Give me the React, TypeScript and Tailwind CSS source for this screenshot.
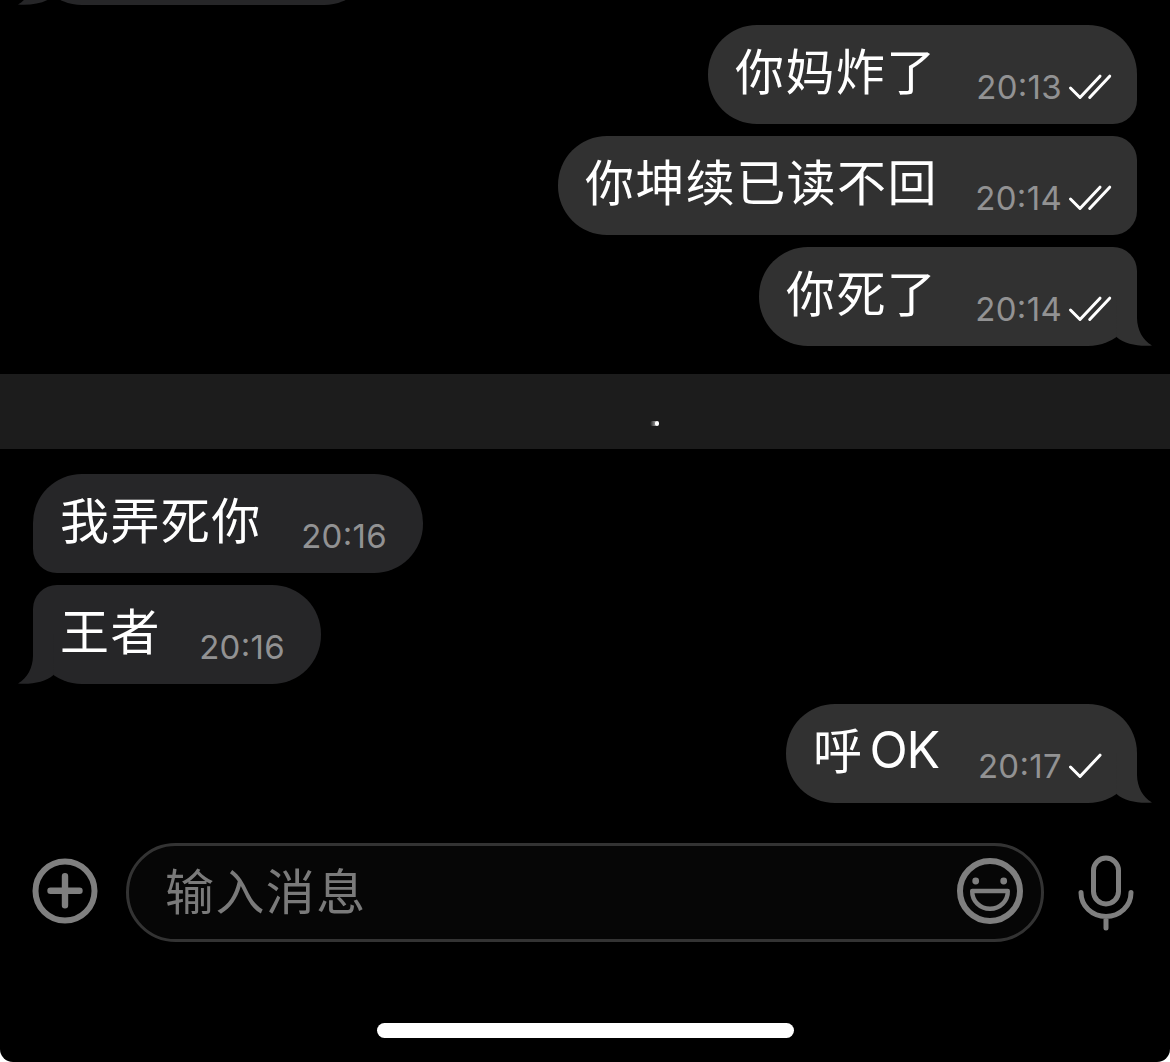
import clsx from "clsx";

type Message = {
  text: string;
  latin?: string;
  time: string;
  outgoing?: boolean;
  read?: boolean;
  tail?: boolean;
  // width, corners and spacing above the bubble
  shape: string;
};

const earlier: Message[] = [
  { text: "", time: "", tail: true, shape: "-mt-[94px] w-[340px] rounded-[49px]" },
  { text: "你妈炸了", time: "20:13", outgoing: true, read: true, shape: "mt-5 w-[429px] rounded-[49px] rounded-br-[24px]" },
  { text: "你坤续已读不回", time: "20:14", outgoing: true, read: true, shape: "mt-3 w-[579px] rounded-[49px] rounded-r-[24px]" },
  { text: "你死了", time: "20:14", outgoing: true, read: true, tail: true, shape: "mt-3 w-[378px] rounded-[49px] rounded-tr-[24px]" }
];

const unread: Message[] = [
  { text: "我弄死你", time: "20:16", shape: "mt-[25px] w-[390px] rounded-[49px] rounded-bl-[24px]" },
  { text: "王者", time: "20:16", tail: true, shape: "mt-3 w-[288px] rounded-[49px] rounded-tl-[24px]" },
  { text: "呼", latin: "OK", time: "20:17", outgoing: true, tail: true, shape: "mt-5 w-[351px] rounded-[49px]" }
];

function Tail({ outgoing }: { outgoing?: boolean }) {
  return (
    <svg
      viewBox="0 0 40 50"
      className={clsx(
        "absolute bottom-0 h-[50px] w-10",
        outgoing ? "-right-[16px] text-[#313131]" : "-left-[16px] -scale-x-100 text-[#262628]"
      )}
      fill="currentColor"
    >
      <path d="M4 0H24V22C24.3 34 29.5 44 39 49.6C24 50.5 12 48 3.5 41Z" />
    </svg>
  );
}

function Checks({ read }: { read?: boolean }) {
  return (
    <svg
      viewBox="0 0 44 28"
      className="ml-[6px] h-7 w-11"
      fill="none"
      stroke="#fff"
      strokeWidth="3"
      strokeLinecap="round"
      strokeLinejoin="round"
    >
      <path d="M2.5 15L12 24.5L32 3.2" />
      {read && <path d="M21.7 24.5L41.7 3.2" />}
    </svg>
  );
}

function Time({ value }: { value: string }) {
  const [hours, minutes] = value.split(":");
  if (!minutes) return null;
  return (
    <span className="whitespace-nowrap">
      {hours}
      <span className="relative -top-[3px]">:</span>
      {minutes}
    </span>
  );
}

function Bubble({ message }: { message: Message }) {
  const { text, latin, time, outgoing, read, tail, shape } = message;
  return (
    <div
      className={clsx(
        "relative flex h-[99px] shrink-0 justify-between pl-[27px]",
        outgoing ? "mr-[33px] self-end bg-[#313131] pr-[25px]" : "ml-[33px] self-start bg-[#262628] pr-9",
        shape
      )}
    >
      {tail && <Tail outgoing={outgoing} />}
      <span className="relative mt-[8px] whitespace-nowrap text-[49px] leading-[72px] tracking-[1.4px] text-white">
        {text}
        {latin && (
          <span className="relative -top-px ml-[6px] font-['Inter'] text-[50px] leading-none tracking-[-1.2px]">{latin}</span>
        )}
      </span>
      <span className="relative mt-[42px] flex h-10 items-center font-['Inter'] text-[33px] leading-10 tracking-[0.3px] text-[#929293]">
        <Time value={time} />
        {outgoing && <Checks read={read} />}
      </span>
    </div>
  );
}

export default function App() {
  return (
    <div className="h-[1062px] w-[1170px] bg-white font-['Noto_Sans_CJK_SC',sans-serif]">
      <main className="flex h-full flex-col overflow-hidden rounded-b-[13px] bg-black">
        {earlier.map((message, i) => (
          <Bubble key={i} message={message} />
        ))}

        <div className="relative mt-7 h-[75px] shrink-0 bg-[#1c1c1c]">
          <span className="absolute left-[650px] top-[47px] h-[5px] w-[7px] rounded-full bg-linear-to-r from-transparent to-[#bbb]" />
          <span className="absolute left-[655px] top-[47px] h-[5px] w-[4px] rounded-full bg-white" />
        </div>

        {unread.map((message, i) => (
          <Bubble key={i} message={message} />
        ))}

        <div className="mt-10 flex h-[99px] shrink-0 items-center text-[#7f7f7f]">
          <svg viewBox="0 0 68 68" className="-mt-[3px] ml-[31px] size-[68px]" fill="none" stroke="currentColor" strokeLinecap="round">
            <circle cx="34" cy="34" r="29.5" strokeWidth="6" />
            <path d="M19.5 33.7H48.5M34 19.2V48.2" strokeWidth="6.4" />
          </svg>

          <div className="ml-[27px] flex h-[99px] w-[918px] items-center justify-between rounded-full border-[3px] border-[#333] bg-[#060606] pl-9 pr-[17px]">
            <span className="-mt-[8px] text-[49px] leading-[72px] tracking-[1.4px] text-[#7a7a7a]">输入消息</span>
            <svg viewBox="0 0 68 68" className="-mt-[3px] size-[68px]" fill="none" stroke="currentColor">
              <circle cx="34" cy="34" r="30" strokeWidth="6" />
              <circle cx="19.7" cy="24" r="3.4" fill="currentColor" stroke="none" />
              <circle cx="47.7" cy="24" r="3.4" fill="currentColor" stroke="none" />
              <path d="M16.2 34H51.8C52 44 44 51.8 34 51.8S16 44 16.2 34Z" strokeWidth="4.4" strokeLinejoin="round" />
            </svg>
          </div>

          <svg viewBox="0 0 60 80" className="ml-8 h-20 w-[60px]" fill="none" stroke="currentColor" strokeWidth="5" strokeLinecap="round">
            <rect x="17.5" y="5" width="25" height="46" rx="12.5" />
            <path d="M5 39.5C5 53 16 63.5 30 63.5S55 53 55 39.5M30 63.5V75" />
          </svg>
        </div>

        <div className="mx-auto mt-[81px] h-[15px] w-[417px] shrink-0 rounded-full bg-white" />
      </main>
    </div>
  );
}
